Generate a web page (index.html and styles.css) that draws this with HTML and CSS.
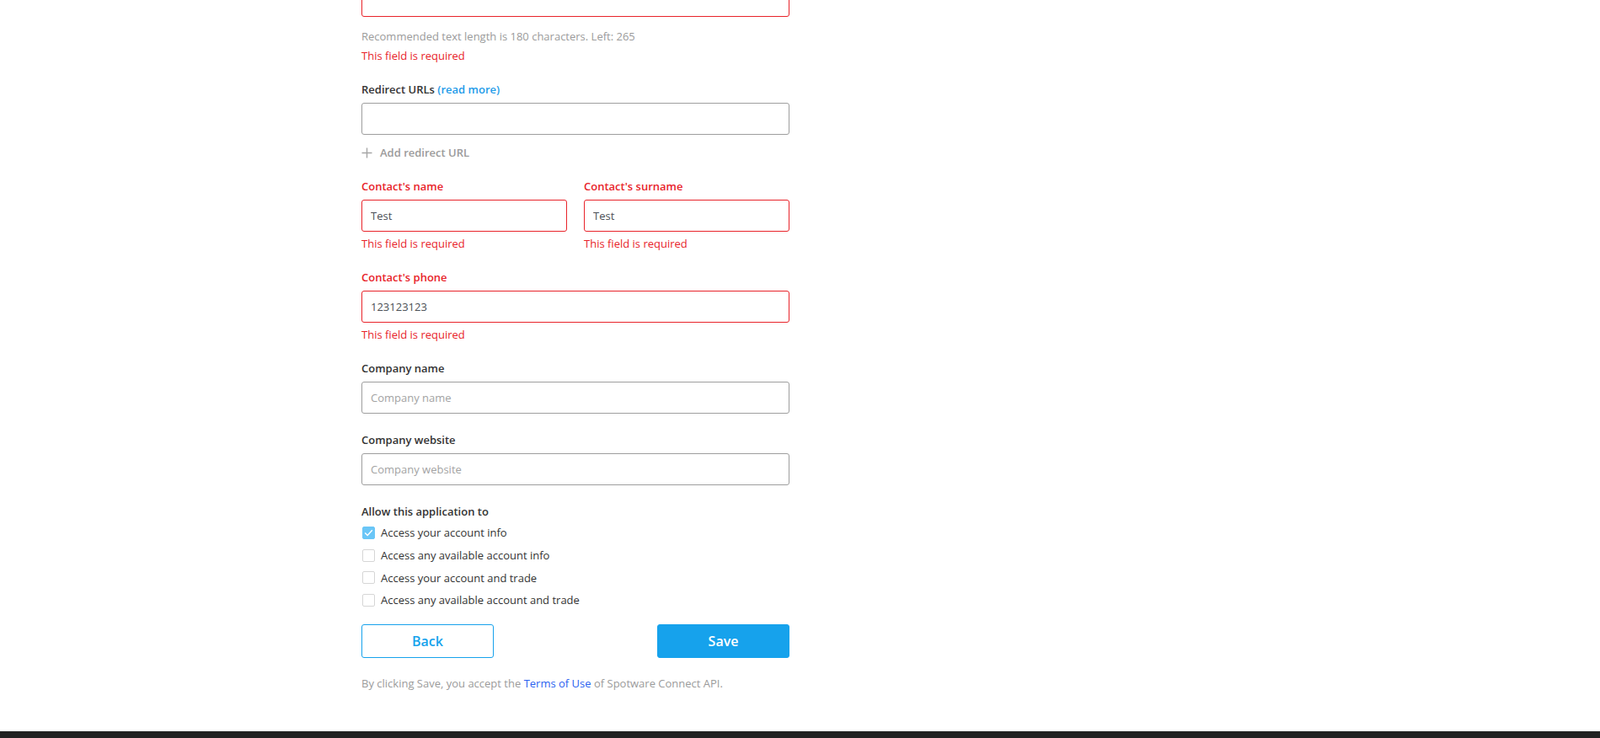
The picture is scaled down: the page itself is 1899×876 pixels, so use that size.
FILE: index.html
```html
<!DOCTYPE html>
<html lang="en">
<head>
  <meta charset="UTF-8">
  <meta name="viewport" content="width=device-width, initial-scale=1.0">
  <title>Edit application</title>
  <link rel="stylesheet" href="styles.css">
</head>
<body>
  <div class="page">
    <form class="app-form">
      <div class="field">
        <textarea class="input input-error textarea"></textarea>
        <div class="hint">Recommended text length is 180 characters. Left: 265</div>
        <div class="error">This field is required</div>
      </div>

      <div class="field">
        <label class="label">Redirect URLs <a href="#" class="read-more">(read more)</a></label>
        <input class="input" type="text">
        <a href="#" class="add-link">
          <svg width="13" height="13" viewBox="0 0 13 13"><path d="M6.5 0.5v12M0.5 6.5h12" stroke="#a6a6a6" stroke-width="1.4" fill="none"/></svg>
          Add redirect URL
        </a>
      </div>

      <div class="field-row">
        <div class="field">
          <label class="label label-error">Contact's name</label>
          <input class="input input-error" type="text" value="Test">
          <div class="error">This field is required</div>
        </div>
        <div class="field">
          <label class="label label-error">Contact's surname</label>
          <input class="input input-error" type="text" value="Test">
          <div class="error">This field is required</div>
        </div>
      </div>

      <div class="field">
        <label class="label label-error">Contact's phone</label>
        <input class="input input-error" type="text" value="123123123">
        <div class="error">This field is required</div>
      </div>

      <div class="field">
        <label class="label">Company name</label>
        <input class="input" type="text" placeholder="Company name">
      </div>

      <div class="field">
        <label class="label">Company website</label>
        <input class="input" type="text" placeholder="Company website">
      </div>

      <div class="permissions">
        <div class="label">Allow this application to</div>
        <label class="check-row">
          <span class="checkbox checked">
            <svg width="11" height="9" viewBox="0 0 11 9"><path d="M1.2 4.4l3 3.1L9.8 1.2" stroke="#fff" stroke-width="1.4" fill="none"/></svg>
          </span>
          Access your account info
        </label>
        <label class="check-row"><span class="checkbox"></span>Access any available account info</label>
        <label class="check-row"><span class="checkbox"></span>Access your account and trade</label>
        <label class="check-row"><span class="checkbox"></span>Access any available account and trade</label>
      </div>

      <div class="actions">
        <button type="button" class="btn btn-outline">Back</button>
        <button type="button" class="btn btn-primary">Save</button>
      </div>

      <p class="terms">By clicking Save, you accept the <a href="#">Terms of Use</a> of Spotware Connect API.</p>
    </form>
  </div>
  <div class="footer"></div>
</body>
</html>
```

FILE: styles.css
```css
:root {
  --red: #e8232a;
  --blue: #16a2ec;
  --text: #333;
  --muted: #9b9b9b;
  --border: #9e9e9e;
}

body {
  margin: 0;
  font-family: "Open Sans", Arial, sans-serif;
  color: var(--text);
  background-color: #fff;
  overflow: hidden;
}

.page {
  padding-left: 429px;
}

.app-form {
  width: 508px;
  margin-top: -60px;
}

.field {
  margin-bottom: 22px;
}

.field-row {
  display: grid;
  grid-template-columns: 1fr 1fr;
  gap: 20px;
}

.label {
  display: block;
  font-size: 13px;
  font-weight: 600;
  line-height: 18px;
  margin-bottom: 7px;
  color: var(--text);
}

.label-error {
  color: var(--red);
}

.read-more {
  color: #1e9be9;
  text-decoration: none;
}

.input {
  display: block;
  box-sizing: border-box;
  width: 100%;
  height: 38px;
  padding: 0 10px;
  border: 1px solid var(--border);
  border-radius: 3px;
  font-family: inherit;
  font-size: 13px;
  color: #4a4f55;
  outline: none;
}

.input::placeholder {
  color: #a3a3a3;
}

.input-error {
  border-color: var(--red);
}

.textarea {
  height: 80px;
  resize: none;
}

.hint {
  margin-top: 14px;
  font-size: 13px;
  line-height: 18px;
  color: var(--muted);
}

.error {
  margin-top: 5px;
  font-size: 13px;
  line-height: 18px;
  color: var(--red);
}

.add-link {
  display: flex;
  align-items: center;
  gap: 9px;
  margin-top: 12px;
  font-size: 13px;
  font-weight: 600;
  line-height: 18px;
  color: var(--muted);
  text-decoration: none;
}

.permissions .label {
  margin-bottom: 3px;
}

.check-row {
  display: flex;
  align-items: center;
  gap: 7px;
  height: 26.7px;
  font-size: 13px;
  color: var(--text);
}

.checkbox {
  display: inline-flex;
  align-items: center;
  justify-content: center;
  box-sizing: border-box;
  width: 15px;
  height: 15px;
  border: 1px solid #d6d6d6;
  border-radius: 2px;
  margin-left: 1px;
}

.checkbox.checked {
  background-color: #6ac6f7;
  border-color: #6ac6f7;
}

.actions {
  display: flex;
  justify-content: space-between;
  margin-top: 15px;
}

.btn {
  box-sizing: border-box;
  width: 157px;
  height: 40px;
  border-radius: 3px;
  font-family: inherit;
  font-size: 16px;
  font-weight: 600;
  cursor: pointer;
}

.btn-outline {
  background-color: #fff;
  border: 1px solid var(--blue);
  color: var(--blue);
}

.btn-primary {
  background-color: var(--blue);
  border: 1px solid var(--blue);
  color: #fff;
}

.terms {
  margin: 21px 0 0;
  font-size: 13px;
  line-height: 18px;
  color: var(--muted);
}

.terms a {
  color: #2a62f0;
  text-decoration: none;
}

.footer {
  margin-top: 48px;
  height: 60px;
  background-color: #222;
}
```
